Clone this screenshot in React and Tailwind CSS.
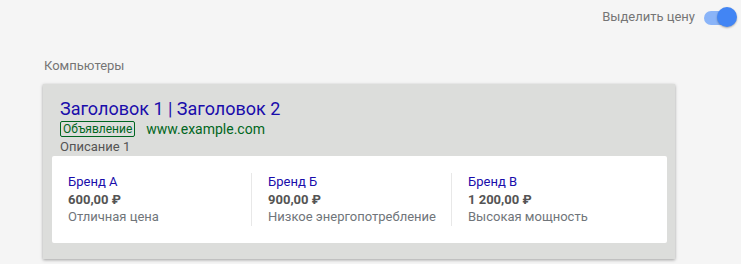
const ITEMS = [
  { brand: 'Бренд А', price: '600,00 ₽', desc: 'Отличная цена' },
  { brand: 'Бренд Б', price: '900,00 ₽', desc: 'Низкое энергопотребление' },
  { brand: 'Бренд В', price: '1 200,00 ₽', desc: 'Высокая мощность' },
]

export default function App() {
  return (
    <div className="h-[264px] w-[741px] bg-[#f5f5f5] font-['Roboto',sans-serif]">
      <div className="flex items-center justify-end pt-[7px] pr-[4px]">
        <span className="text-[13px] text-[#757575] mr-[8px]">Выделить цену</span>
        <div className="relative h-[20px] w-[34px]">
          <div className="absolute left-[1px] top-[4px] h-[14px] w-[26px] rounded-full bg-[#8ab4f8]" />
          <div className="absolute left-[14px] top-0 h-[20px] w-[20px] rounded-full bg-[#4285f4] shadow-[0_1px_2px_rgba(0,0,0,0.3)]" />
        </div>
      </div>

      <div className="pl-[44px] pt-[31px] text-[13px] leading-[16px] text-[#757575]">Компьютеры</div>

      <div className="ml-[43px] mt-[10px] w-[632px] bg-[#dcdddb] pl-[9px] pr-[8px] pt-[14px] pb-[16px] shadow-[0_1px_3px_rgba(0,0,0,0.35)]">
        <div className="pl-[8px]">
          <div className="text-[18px] leading-[22px] text-[#1a0dab]">Заголовок 1 | Заголовок 2</div>
          <div className="flex h-[18px] items-center">
            <span className="rounded-[2px] border border-[#006621] px-[2px] text-[12px] leading-[14px] text-[#006621]">Объявление</span>
            <span className="ml-[11px] text-[14px] leading-[18px] text-[#006621]">www.example.com</span>
          </div>
          <div className="text-[13px] leading-[17px] text-[#545454]">Описание 1</div>
        </div>
        <div className="mt-[1px] flex rounded-[2px] bg-white py-[17px]">
          {ITEMS.map((it, i) => (
            <div
              key={it.brand}
              className={
                'w-[200px] pl-[16px] text-[13px] leading-[17.5px] ' +
                (i < 2 ? 'border-r border-[#e8e8e8]' : '')
              }
            >
              <div className="text-[#1a0dab]">{it.brand}</div>
              <div className="font-bold text-[#545454]">{it.price}</div>
              <div className="text-[#70757a]">{it.desc}</div>
            </div>
          ))}
        </div>
      </div>
    </div>
  )
}
